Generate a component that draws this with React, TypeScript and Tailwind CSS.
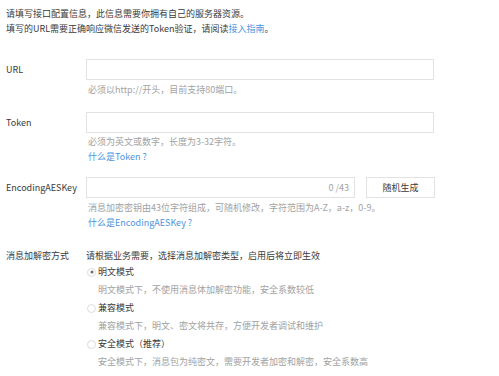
import React from "react";

const font = { fontFamily: '"Noto Sans CJK SC", "Noto Sans", sans-serif' };

function Radio({ checked }: { checked?: boolean }) {
  return (
    <span className="relative mr-[2px] inline-block h-[9px] w-[9px] shrink-0 rounded-full border border-[#dcdcdc] bg-white">
      {checked && (
        <span className="absolute left-1/2 top-1/2 h-[3px] w-[3px] -translate-x-1/2 -translate-y-1/2 rounded-full bg-[#707070]" />
      )}
    </span>
  );
}

export default function App() {
  return (
    <div
      className="h-[376px] w-[499px] overflow-hidden bg-white pl-[6px] pt-[6px] text-[9px] text-[#3a3a3a]"
      style={font}
    >
      <div className="leading-[15px]">
        <p>请填写接口配置信息，此信息需要你拥有自己的服务器资源。</p>
        <p>
          填写的URL需要正确响应微信发送的Token验证，请阅读
          <span className="text-[#4b93dc]">接入指南</span>。
        </p>
      </div>

      {/* URL */}
      <div className="mt-[23px] flex items-center">
        <div className="w-[80px]">URL</div>
        <div className="h-[21px] w-[348px] border border-[#e2e2e2]" />
      </div>
      <div className="ml-[82px] mt-[3px] leading-[14px] text-[#a2a2a2]">
        必须以http://开头，目前支持80端口。
      </div>

      {/* Token */}
      <div className="mt-[15px] flex items-center">
        <div className="w-[80px]">Token</div>
        <div className="h-[21px] w-[348px] border border-[#e2e2e2]" />
      </div>
      <div className="ml-[82px] mt-[2px] leading-[14px] text-[#a2a2a2]">
        必须为英文或数字，长度为3-32字符。
      </div>
      <div className="ml-[82px] leading-[15px] text-[#4b93dc]">什么是Token ?</div>

      {/* EncodingAESKey */}
      <div className="mt-[13px] flex items-center">
        <div className="w-[80px]">EncodingAESKey</div>
        <div className="flex h-[21px] w-[269px] items-center justify-end border border-[#e2e2e2] pr-[5px] text-[#a2a2a2]">
          0 /43
        </div>
        <div className="ml-[11px] flex h-[21px] w-[69px] items-center justify-center border border-[#e2e2e2] text-[#3a3a3a]">
          随机生成
        </div>
      </div>
      <div className="ml-[82px] mt-[3px] leading-[14px] text-[#a2a2a2]">
        消息加密密钥由43位字符组成，可随机修改，字符范围为A-Z，a-z，0-9。
      </div>
      <div className="ml-[82px] leading-[15px] text-[#4b93dc]">什么是EncodingAESKey ?</div>

      {/* 消息加解密方式 */}
      <div className="mt-[19px] flex leading-[14px]">
        <div className="w-[80px]">消息加解密方式</div>
        <div>请根据业务需要，选择消息加解密类型，启用后将立即生效</div>
      </div>
      <div className="ml-[81px] leading-[18px]">
        <div className="flex items-center">
          <Radio checked />
          <span>明文模式</span>
        </div>
        <div className="pl-[11px] text-[#a2a2a2]">明文模式下，不使用消息体加解密功能，安全系数较低</div>
        <div className="flex items-center">
          <Radio />
          <span>兼容模式</span>
        </div>
        <div className="pl-[11px] text-[#a2a2a2]">兼容模式下，明文、密文将共存，方便开发者调试和维护</div>
        <div className="flex items-center">
          <Radio />
          <span>安全模式（推荐）</span>
        </div>
        <div className="pl-[11px] text-[#a2a2a2]">安全模式下，消息包为纯密文，需要开发者加密和解密，安全系数高</div>
      </div>
    </div>
  );
}
